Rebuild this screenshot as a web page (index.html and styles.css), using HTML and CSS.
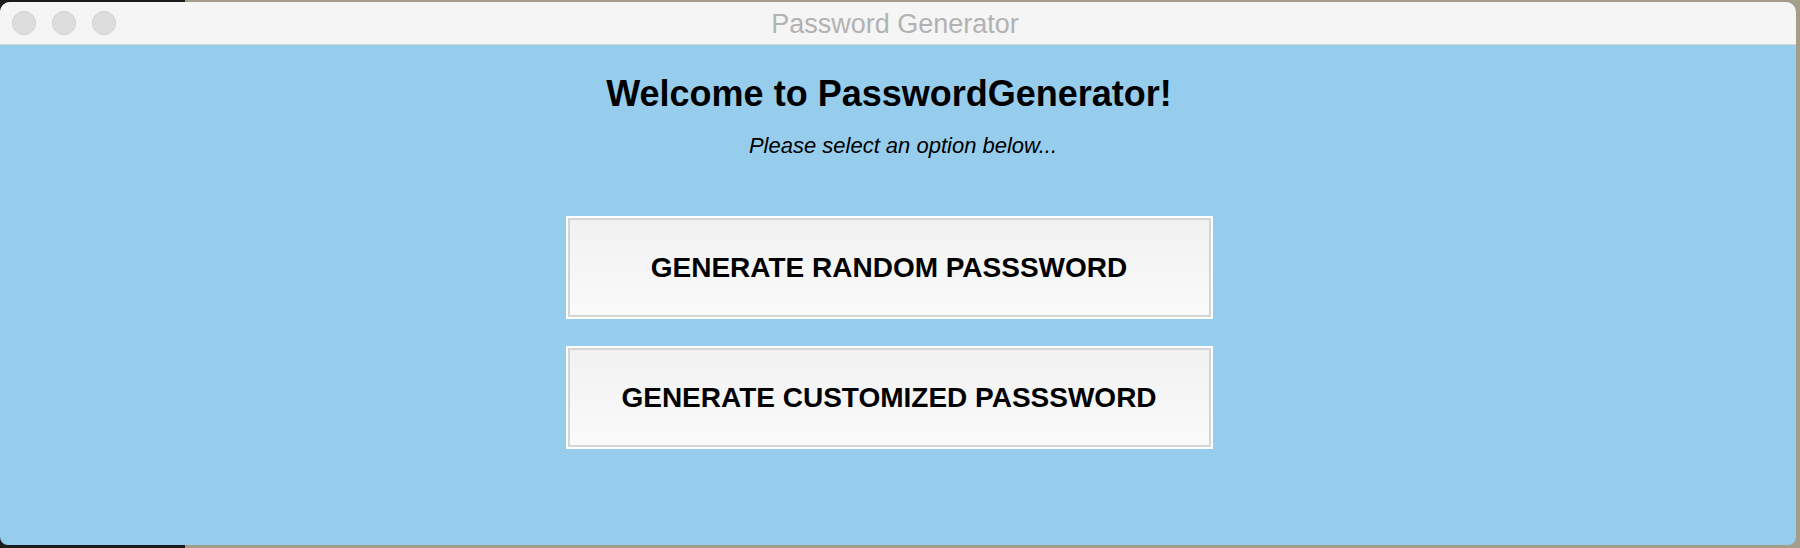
FILE: index.html
```html
<!DOCTYPE html>
<html lang="en">
<head>
<meta charset="utf-8">
<title>Password Generator</title>
<link rel="stylesheet" href="styles.css">
</head>
<body>
<div class="window">
  <div class="titlebar">
    <div class="lights">
      <span class="light"></span>
      <span class="light"></span>
      <span class="light"></span>
    </div>
    <div class="title">Password Generator</div>
    <div class="spacer"></div>
  </div>
  <div class="content">
    <h1 class="heading">Welcome to PasswordGenerator!</h1>
    <p class="subtitle">Please select an option below...</p>
    <button class="option first">GENERATE RANDOM PASSSWORD</button>
    <button class="option">GENERATE CUSTOMIZED PASSSWORD</button>
  </div>
</div>
</body>
</html>
```

FILE: styles.css
```css
html, body {
  margin: 0;
  padding: 0;
}
body {
  width: 1800px;
  height: 548px;
  overflow: hidden;
  background: linear-gradient(90deg, #1c1c1c 0, #1c1c1c 185px, #a39d89 185px, #a39d89 100%);
  font-family: "Liberation Sans", Arial, sans-serif;
}
.window {
  margin-top: 2px;
  width: 1796px;
  height: 543px;
  border-radius: 10px 10px 8px 8px;
  overflow: hidden;
  display: flex;
  flex-direction: column;
  background: #96cdec;
}
.titlebar {
  height: 42px;
  flex: none;
  background: #f5f5f5;
  border-bottom: 1px solid #d6d6d6;
  display: grid;
  grid-template-columns: 1fr auto 1fr;
  align-items: center;
}
.lights {
  display: flex;
  gap: 16px;
  padding-left: 12px;
}
.light {
  width: 24px;
  height: 24px;
  box-sizing: border-box;
  border-radius: 50%;
  background: #dddddd;
  border: 1px solid #cfcfcf;
}
.title {
  font-size: 27px;
  color: #b2b2b2;
  line-height: 30px;
  padding-top: 2px;
  padding-right: 6px;
}
.content {
  flex: 1;
  display: flex;
  flex-direction: column;
  align-items: center;
  padding-top: 31px;
  padding-right: 18px;
}
.heading {
  margin: 0;
  font-size: 36px;
  line-height: 36px;
  font-weight: bold;
  color: #000;
}
.subtitle {
  margin: 23px 0 0 28px;
  font-size: 22px;
  line-height: 22px;
  font-style: italic;
  color: #000;
}
.option {
  width: 647px;
  height: 103px;
  box-sizing: border-box;
  margin: 27px 0 0 0;
  padding: 0;
  border: 2px solid #ffffff;
  box-shadow: inset 0 0 0 2px #d5d5d5;
  background: linear-gradient(180deg, #f1f1f1 0%, #fafafa 100%);
  font-family: "Liberation Sans", Arial, sans-serif;
  font-size: 28px;
  font-weight: bold;
  color: #000;
  display: flex;
  align-items: center;
  justify-content: center;
}
.option.first {
  margin-top: 59px;
}
```
